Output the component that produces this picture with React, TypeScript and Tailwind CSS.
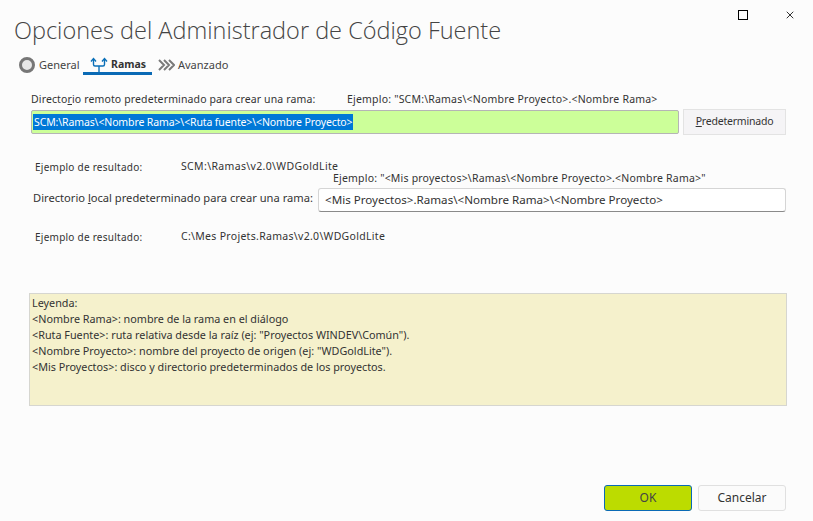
import { X } from 'lucide-react';

const uiFont = { fontFamily: '"Noto Sans", sans-serif' };

function BranchIcon() {
    return (
        <svg width="18" height="15" viewBox="0 0 18 15" fill="none" stroke="#0a6fb8" strokeWidth="1.4" className="shrink-0">
            <path d="M9 15V9M3.500 2v5.500a1.500 1.500 0 0 0 1.500 1.500h8a1.500 1.500 0 0 0 1.500-1.500V2" />
            <path d="M1 4.500L3.500 1.500L6 4.500M12 4.500L14.500 1.500L17 4.500" />
        </svg>
    );
}

function ChevronsIcon() {
    return (
        <svg width="17" height="12" viewBox="0 0 17 12" fill="none" stroke="#7a7a7a" strokeWidth="2" className="shrink-0">
            <path d="M1 1l5 5-5 5M6 1l5 5-5 5M11 1l5 5-5 5" />
        </svg>
    );
}

export default function App() {
    return (
        <div className="w-[813px] h-[521px] bg-[#fcfcfc] flex flex-col overflow-hidden text-[#333333]" style={uiFont}>
            {/* Window buttons */}
            <div className="h-[9px] relative">
                <div className="absolute top-[10px] left-[738px] w-[10px] h-[10px] border border-black"></div>
                <div className="absolute top-[9px] left-[784px] text-[#333333]"><X size={12} strokeWidth={1} absoluteStrokeWidth /></div>
            </div>

            {/* Title */}
            <h1 className="pl-[14px] h-[42px] text-[23.500px] leading-[42px] font-light text-[#444444] whitespace-nowrap" style={{ fontFamily: '"Open Sans", sans-serif' }}>
                Opciones del Administrador de Código Fuente
            </h1>

            {/* Tabs */}
            <div className="h-[24px] flex items-start pl-[19px] text-[11px]">
                <div className="w-[64px] flex items-center h-[28px]">
                    <div className="w-[16px] h-[16px] rounded-full border-[3.500px] border-[#777777] bg-[#e8e8e8] shrink-0"></div>
                    <span className="ml-[4px] text-[#444444]">General</span>
                </div>
                <div className="w-[69px] h-[24px] pt-[6px] border-b-[3px] border-[#0a6ab5] flex items-center pl-[7px]">
                    <BranchIcon />
                    <span className="ml-[3px] font-bold text-[10.500px] text-[#333333] leading-none">Ramas</span>
                </div>
                <div className="ml-[6px] flex items-center h-[28px]">
                    <ChevronsIcon />
                    <span className="ml-[3px] text-[#444444]">Avanzado</span>
                </div>
            </div>

            {/* Remote directory */}
            <div className="mt-[15px] h-[19px] flex items-center pl-[31px]">
                <span className="w-[316px] text-[10.500px] tracking-[0.13px] whitespace-nowrap">Directo<span className="underline">r</span>io remoto predeterminado para crear una rama:</span>
                <span className="text-[10.500px] tracking-[0.2px] whitespace-nowrap">Ejemplo: "SCM:\Ramas\&lt;Nombre Proyecto&gt;.&lt;Nombre Rama&gt;</span>
            </div>
            <div className="flex items-center pl-[31px]">
                <div className="w-[648px] h-[24px] bg-[#ccff99] border border-[#b5b5b5] rounded-[2px] flex items-center pl-[1px] text-[10.500px] tracking-[-0.12px]">
                    <span className="bg-[#0078d7] text-white h-[16px] leading-[16px] px-[1px] whitespace-nowrap">SCM:\Ramas\&lt;Nombre Rama&gt;\&lt;Ruta fuente&gt;\&lt;Nombre Proyecto&gt;</span>
                </div>
                <button className="ml-[4px] w-[103px] h-[26px] bg-[#f5f4f6] border border-[#e3e3e3] text-[10.500px] tracking-[-0.2px] text-[#333333]">
                    <span className="underline">P</span>redeterminado
                </button>
            </div>

            {/* Remote result */}
            <div className="mt-[28px] h-[8px] flex items-center pl-[35px] text-[10px] whitespace-nowrap">
                <span className="w-[146px] tracking-[0.25px]">Ejemplo de resultado:</span>
                <span className="text-[10.500px] tracking-[0.35px]">SCM:\Ramas\v2.0\WDGoldLite</span>
            </div>

            {/* Local directory */}
            <div className="h-[14px] pt-[2px] flex items-center pl-[333px] text-[10.500px] tracking-[0.2px] whitespace-nowrap">
                Ejemplo: "&lt;Mis proyectos&gt;\Ramas\&lt;Nombre Proyecto&gt;.&lt;Nombre Rama&gt;"
            </div>
            <div className="mt-[3px] flex items-center pl-[33px]">
                <span className="w-[285px] mb-[3px] text-[11.150px] whitespace-nowrap text-[#333333]">Directorio <span className="underline">l</span>ocal predeterminado para crear una rama:</span>
                <div className="w-[468px] h-[24px] bg-white border border-[#d5d5d5] border-b-[#8a8a8a] rounded-[3px] flex items-center pl-[6px] text-[11.600px] text-[#333333]">
                    &lt;Mis Proyectos&gt;.Ramas\&lt;Nombre Rama&gt;\&lt;Nombre Proyecto&gt;
                </div>
            </div>

            {/* Local result */}
            <div className="mt-[17px] h-[16px] flex items-center pl-[35px] text-[10px] whitespace-nowrap">
                <span className="w-[146px] tracking-[0.25px]">Ejemplo de resultado:</span>
                <span className="text-[10.500px] tracking-[0.3px]">C:\Mes Projets.Ramas\v2.0\WDGoldLite</span>
            </div>

            {/* Legend */}
            <div className="mt-[48px] ml-[29px] w-[758px] h-[113px] bg-[#f5f1cc] border border-[#d6d6d0] pl-[2px] pt-[1px] text-[10.800px] leading-[16px] text-[#333333] whitespace-nowrap">
                <div>Leyenda:</div>
                <div>&lt;Nombre Rama&gt;: nombre de la rama en el diálogo</div>
                <div>&lt;Ruta Fuente&gt;: ruta relativa desde la raíz (ej: "Proyectos WINDEV\Común").</div>
                <div>&lt;Nombre Proyecto&gt;: nombre del proyecto de origen (ej: "WDGoldLite").</div>
                <div>&lt;Mis Proyectos&gt;: disco y directorio predeterminados de los proyectos.</div>
            </div>

            {/* Footer */}
            <div className="mt-[79px] flex justify-end gap-[6px] pr-[27px]">
                <button className="w-[88px] h-[26px] bg-[#bcdc00] border border-[#0a6ab5] rounded-[3px] text-[12px] text-[#444444]">OK</button>
                <button className="w-[88px] h-[26px] bg-[#fbfbfb] border border-[#e0e0e0] rounded-[3px] text-[12px] text-[#333333]">Cancelar</button>
            </div>
        </div>
    );
}
